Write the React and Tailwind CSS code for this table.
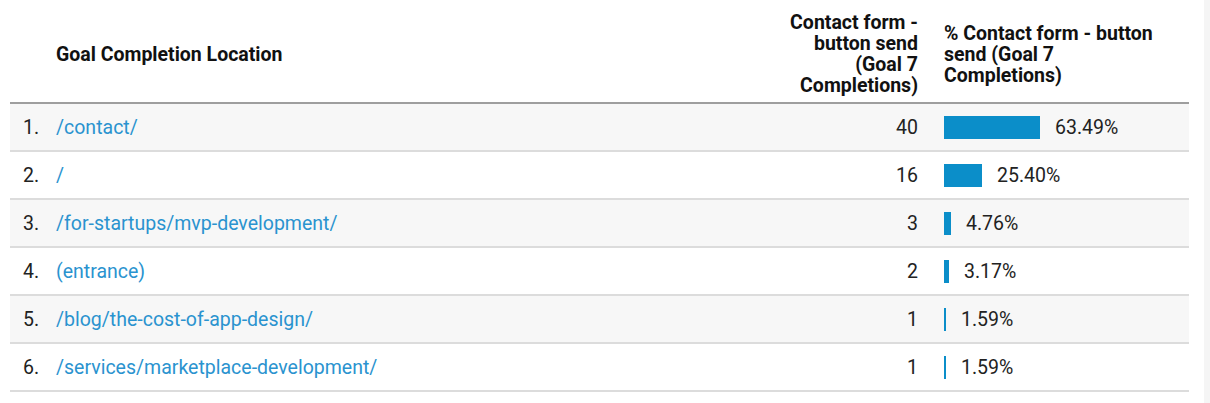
import React from 'react'

const rows = [
  { page: '/contact/', count: 40, pct: 63.49 },
  { page: '/', count: 16, pct: 25.4 },
  { page: '/for-startups/mvp-development/', count: 3, pct: 4.76 },
  { page: '(entrance)', count: 2, pct: 3.17 },
  { page: '/blog/the-cost-of-app-design/', count: 1, pct: 1.59 },
  { page: '/services/marketplace-development/', count: 1, pct: 1.59 },
]

function Row({ index, row }) {
  const barWidth = Math.max(2, Math.round(row.pct * 1.51))
  return (
    <div
      className={`grid grid-cols-[770px_164px_245px] h-[48px] pt-px border-b-2 border-[#dcdcdc] text-[19.5px] text-[#222] ${
        index % 2 === 0 ? 'bg-[#f7f7f7]' : 'bg-white'
      }`}
    >
      <div className="flex items-center pl-[13px]">
        <span className="w-[33px]">{index + 1}.</span>
        <span className="text-[#2a93cf]">{row.page}</span>
      </div>
      <div className="flex items-center justify-end pr-[26px]">{row.count}</div>
      <div className="flex items-center">
        <div className="h-[23px] bg-[#0b8ec9]" style={{ width: barWidth }} />
        <span className="ml-[15px]">{row.pct.toFixed(2)}%</span>
      </div>
    </div>
  )
}

export default function App() {
  return (
    <div className="flex h-[403px] w-[1210px] overflow-hidden bg-white font-['Roboto',sans-serif]">
      <div className="ml-[10px] w-[1179px]">
        <div className="grid grid-cols-[770px_164px_245px] h-[104px] pt-[6px] border-b-2 border-[#9e9e9e] text-[19.5px] font-bold leading-[21px] text-[#111]">
          <div className="flex items-center pl-[46px]">Goal Completion Location</div>
          <div className="flex items-center justify-end pr-[26px] text-right">
            <span>
              Contact form -<br />
              button send<br />
              (Goal 7<br />
              Completions)
            </span>
          </div>
          <div className="flex items-center">
            <span>
              % Contact form - button<br />
              send (Goal 7<br />
              Completions)
            </span>
          </div>
        </div>
        {rows.map((row, i) => (
          <Row key={row.page} index={i} row={row} />
        ))}
      </div>
      <div className="ml-[15px] w-[6px] bg-[#f5f5f5]" />
    </div>
  )
}
